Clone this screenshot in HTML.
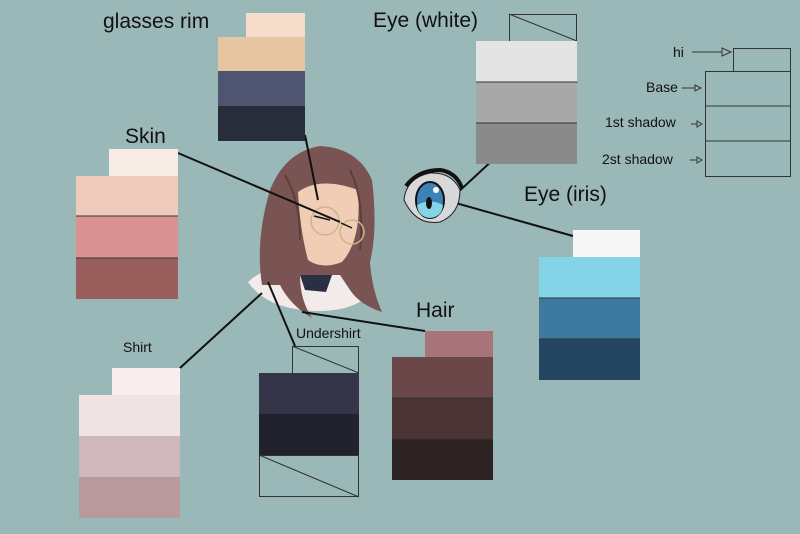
<!DOCTYPE html>
<html><head><meta charset="utf-8"><style>
html,body{margin:0;padding:0;background:#9bb8b9;}
svg{display:block}
text{font-family:"Liberation Sans",sans-serif;fill:#111}
</style></head><body>
<svg width="800" height="534" viewBox="0 0 800 534" xmlns="http://www.w3.org/2000/svg">
<rect width="800" height="534" fill="#9bb8b9"/>
<!-- character -->
<g>
<path d="M248 282 Q270 262 300 268 L330 270 Q360 262 372 285 Q372 300 345 308 Q320 314 290 308 Q262 302 248 282Z" fill="#f3eaea"/>
<path d="M300 275 L332 275 L326 292 L305 290Z" fill="#2a2f44"/>
<path d="M262 285 Q255 240 270 190 Q285 152 320 146 Q358 148 372 180 Q378 230 370 262 Q372 290 382 312 Q360 305 350 290 L340 275 L300 275 Q300 300 312 318 Q290 305 280 285Z" fill="#7a5452"/>
<path d="M298 192 Q320 176 358 190 Q362 240 342 262 Q322 270 308 260 Q300 230 298 192Z" fill="#f2cdb6"/>
<path d="M285 175 Q300 200 300 240 M350 170 Q365 200 360 250" stroke="#5e3e3d" stroke-width="2" fill="none"/>
<circle cx="325" cy="221" r="14" fill="none" stroke="#c9b58c" stroke-width="1.5"/>
<circle cx="352" cy="232" r="12" fill="none" stroke="#c9b58c" stroke-width="1.5"/>
<path d="M314 216 L330 220 M341 223 L352 228" stroke="#111" stroke-width="1.5"/>
</g>
<!-- leader lines -->
<g stroke="#111" stroke-width="2" fill="none">
<line x1="178" y1="153" x2="340" y2="222"/>
<line x1="305" y1="135" x2="318" y2="200"/>
<line x1="445" y1="200" x2="573" y2="236"/>
<line x1="180" y1="368" x2="262" y2="293"/>
<line x1="268" y1="282" x2="295" y2="346"/>
<line x1="302" y1="312" x2="425" y2="331"/>
<line x1="577" y1="82" x2="455" y2="195"/>
</g>
<!-- glasses rim -->
<text x="103" y="28" font-size="21">glasses rim</text>
<rect x="246" y="13" width="59" height="24" fill="#f5dccb"/>
<rect x="218" y="37" width="87" height="34" fill="#e6c5a2"/>
<rect x="218" y="71" width="87" height="35" fill="#4f5570"/>
<rect x="218" y="106" width="87" height="35" fill="#282c3b"/>
<!-- skin -->
<text x="125" y="143" font-size="21">Skin</text>
<rect x="109" y="149" width="69" height="27" fill="#f7ebe5"/>
<rect x="76" y="176" width="102" height="40" fill="#eecbba"/>
<rect x="76" y="216" width="102" height="42" fill="#db9293"/>
<rect x="76" y="258" width="102" height="41" fill="#9a5f5c"/>
<g stroke="#333" stroke-width="1"><line x1="76" y1="216" x2="178" y2="216"/><line x1="76" y1="258" x2="178" y2="258"/></g>
<!-- eye white -->
<text x="373" y="27" font-size="21">Eye (white)</text>
<rect x="509.5" y="14.5" width="67" height="27" fill="none" stroke="#333"/>
<line x1="509" y1="14" x2="577" y2="41" stroke="#333"/>
<rect x="476" y="41" width="101" height="41" fill="#e4e4e4"/>
<rect x="476" y="82" width="101" height="41" fill="#a8a8a8"/>
<rect x="476" y="123" width="101" height="41" fill="#8a8a8a"/>
<g stroke="#333"><line x1="476" y1="82" x2="577" y2="82"/><line x1="476" y1="123" x2="577" y2="123"/></g>
<!-- legend -->
<g stroke="#333" fill="none" stroke-width="1">
<rect x="733.5" y="48.5" width="57" height="23"/>
<rect x="705.5" y="71.5" width="85" height="105"/>
<line x1="705" y1="106" x2="791" y2="106"/><line x1="705" y1="141" x2="791" y2="141"/>
<line x1="692" y1="52" x2="722" y2="52"/><path d="M722 48 L731 52 L722 56Z"/>
<line x1="682" y1="88" x2="695" y2="88"/><path d="M695 85 L701 88 L695 91Z"/>
<line x1="691" y1="124" x2="697" y2="124"/><path d="M697 121 L702 124 L697 127Z"/>
<line x1="690" y1="160" x2="697" y2="160"/><path d="M697 157 L702 160 L697 163Z"/>
</g>
<text x="673" y="57" font-size="14">hi</text>
<text x="646" y="92" font-size="14">Base</text>
<text x="605" y="127" font-size="14">1st shadow</text>
<text x="602" y="164" font-size="14">2st shadow</text>
<!-- eye iris -->
<text x="524" y="201" font-size="21">Eye (iris)</text>
<rect x="573" y="230" width="67" height="27" fill="#f7f7f7"/>
<rect x="539" y="257" width="101" height="41" fill="#85d3e6"/>
<rect x="539" y="298" width="101" height="41" fill="#3d7aa0"/>
<rect x="539" y="339" width="101" height="41" fill="#244761"/>
<g stroke="#333"><line x1="539" y1="298" x2="640" y2="298"/><line x1="539" y1="339" x2="640" y2="339"/></g>
<!-- eye drawing -->
<g>
<path d="M404 200 Q406 178 430 173 Q452 172 460 190 Q460 214 440 222 Q416 226 404 200Z" fill="#d8d8d8" stroke="#222" stroke-width="1"/>
<path d="M406 186 Q418 170 440 170 Q456 172 462 188" fill="none" stroke="#111" stroke-width="4"/>
<ellipse cx="430" cy="200" rx="14" ry="18" fill="#3c83b5" stroke="#111" stroke-width="2"/>
<path d="M417 205 Q430 198 443 205 Q442 217 430 218 Q418 217 417 205Z" fill="#85d3e6"/>
<ellipse cx="429" cy="203" rx="3" ry="6" fill="#111"/>
<circle cx="436" cy="190" r="3" fill="#fff"/>
</g>
<!-- shirt -->
<text x="123" y="352" font-size="14">Shirt</text>
<rect x="112" y="368" width="68" height="27" fill="#f9eeef"/>
<rect x="79" y="395" width="101" height="41" fill="#f0e3e3"/>
<rect x="79" y="436" width="101" height="41" fill="#cfb8bd"/>
<rect x="79" y="477" width="101" height="41" fill="#b89a9d"/>
<!-- undershirt -->
<text x="296" y="338" font-size="14">Undershirt</text>
<rect x="292.5" y="346.5" width="66" height="27" fill="none" stroke="#333"/>
<line x1="292" y1="346" x2="359" y2="373" stroke="#333"/>
<rect x="259" y="373" width="100" height="41" fill="#353449"/>
<rect x="259" y="414" width="100" height="41" fill="#22222c"/>
<rect x="259.5" y="455.5" width="99" height="41" fill="none" stroke="#333"/>
<line x1="259" y1="455" x2="359" y2="497" stroke="#333"/>
<!-- hair -->
<text x="416" y="317" font-size="21">Hair</text>
<rect x="425" y="331" width="68" height="26" fill="#a67479"/>
<rect x="392" y="357" width="101" height="41" fill="#6a4748"/>
<rect x="392" y="398" width="101" height="41" fill="#4a3434"/>
<rect x="392" y="439" width="101" height="41" fill="#2e2323"/>
<g stroke="#333"><line x1="392" y1="398" x2="493" y2="398"/><line x1="392" y1="439" x2="493" y2="439"/></g>
</svg>
</body></html>
